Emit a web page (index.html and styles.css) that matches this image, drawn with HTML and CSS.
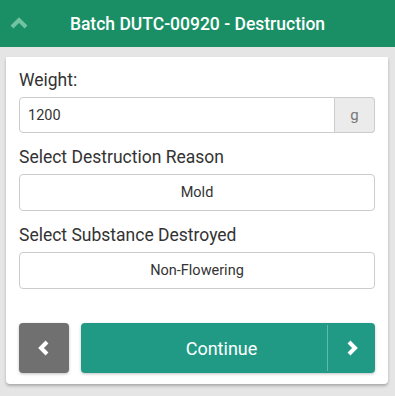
FILE: index.html
```html
<!DOCTYPE html>
<html lang="en">
<head>
  <meta charset="UTF-8" />
  <meta name="viewport" content="width=device-width, initial-scale=1.0" />
  <title>Batch Destruction</title>
  <link rel="stylesheet" href="styles.css">
</head>
<body>
  <header class="topbar">
    <button class="topbar--toggle" aria-label="Collapse">
      <svg width="18" height="12" viewBox="0 0 18 12">
        <polyline points="2,10 9,3 16,10" fill="none" stroke="currentColor" stroke-width="4" />
      </svg>
    </button>
    <h1 class="topbar--title">Batch DUTC-00920 - Destruction</h1>
  </header>

  <main class="card">
    <div class="campo">
      <label class="campo--label">Weight:</label>
      <div class="grupo">
        <input class="grupo--input" type="text" value="1200" />
        <span class="grupo--addon">g</span>
      </div>
    </div>

    <div class="campo">
      <label class="campo--label">Select Destruction Reason</label>
      <button class="selector">Mold</button>
    </div>

    <div class="campo">
      <label class="campo--label">Select Substance Destroyed</label>
      <button class="selector">Non-Flowering</button>
    </div>

    <div class="acciones">
      <button class="btn-volver" aria-label="Back">
        <svg width="14" height="16" viewBox="0 0 14 16">
          <polyline points="10,2 4,8 10,14" fill="none" stroke="currentColor" stroke-width="4" />
        </svg>
      </button>
      <button class="btn-continuar">
        <span class="btn-continuar--texto">Continue</span>
        <span class="btn-continuar--flecha">
          <svg width="14" height="16" viewBox="0 0 14 16">
            <polyline points="4,2 10,8 4,14" fill="none" stroke="currentColor" stroke-width="4" />
          </svg>
        </span>
      </button>
    </div>
  </main>
</body>
</html>
```

FILE: styles.css
```css
* {
  box-sizing: border-box;
  margin: 0;
  padding: 0;
  font-family: Roboto, 'Liberation Sans', sans-serif;
}

body {
  background-color: #e5e5e5;
  color: #333;
  min-height: 100vh;
}

.topbar {
  background-color: #1a8f66;
  height: 47px;
  display: flex;
  align-items: center;
  justify-content: center;
  position: relative;
}

.topbar--toggle {
  position: absolute;
  left: 10px;
  top: 17px;
  background: none;
  border: none;
  color: #72c3a2;
  display: flex;
}

.topbar--title {
  color: #fff;
  font-size: 17.5px;
  font-weight: 500;
}

.card {
  background-color: #fff;
  margin: 10px 7px 0 6px;
  padding: 12px 13px 11px;
  border-radius: 0 0 4px 4px;
  box-shadow: 0 2px 3px rgba(0, 0, 0, 0.25);
}

.campo {
  margin-bottom: 13px;
}

.campo--label {
  display: block;
  font-size: 17.5px;
  line-height: 22px;
  margin-bottom: 6px;
  color: #333;
}

.grupo {
  display: flex;
  height: 36px;
}

.grupo--input {
  flex: 1;
  border: 1px solid #ccc;
  border-radius: 4px 0 0 4px;
  padding: 0 8px;
  font-size: 14.5px;
  color: #333;
  outline: none;
}

.grupo--addon {
  width: 40px;
  background-color: #ebebeb;
  border: 1px solid #ccc;
  border-left: none;
  border-radius: 0 4px 4px 0;
  color: #777;
  font-size: 15px;
  display: flex;
  align-items: center;
  justify-content: center;
}

.selector {
  display: block;
  width: 100%;
  height: 37px;
  background-color: #fff;
  border: 1px solid #ccc;
  border-radius: 4px;
  font-size: 14.5px;
  color: #333;
  cursor: pointer;
}

.acciones {
  display: flex;
  gap: 12px;
  margin-top: 34px;
  height: 50px;
}

.btn-volver {
  width: 50px;
  border: none;
  border-radius: 4px;
  background-color: #707070;
  color: #fff;
  display: flex;
  align-items: center;
  justify-content: center;
  box-shadow: 0 1px 3px rgba(0, 0, 0, 0.25);
  cursor: pointer;
}

.btn-continuar {
  flex: 1;
  border: none;
  border-radius: 4px;
  background-color: #209a85;
  color: #fff;
  display: flex;
  align-items: stretch;
  box-shadow: 0 1px 3px rgba(0, 0, 0, 0.25);
  cursor: pointer;
}

.btn-continuar--texto {
  flex: 1;
  display: flex;
  align-items: center;
  justify-content: center;
  padding-left: 35px;
  font-size: 18px;
}

.btn-continuar--flecha {
  width: 48px;
  border-left: 1px solid rgba(255, 255, 255, 0.3);
  margin: 2px 0;
  display: flex;
  align-items: center;
  justify-content: center;
}
```
